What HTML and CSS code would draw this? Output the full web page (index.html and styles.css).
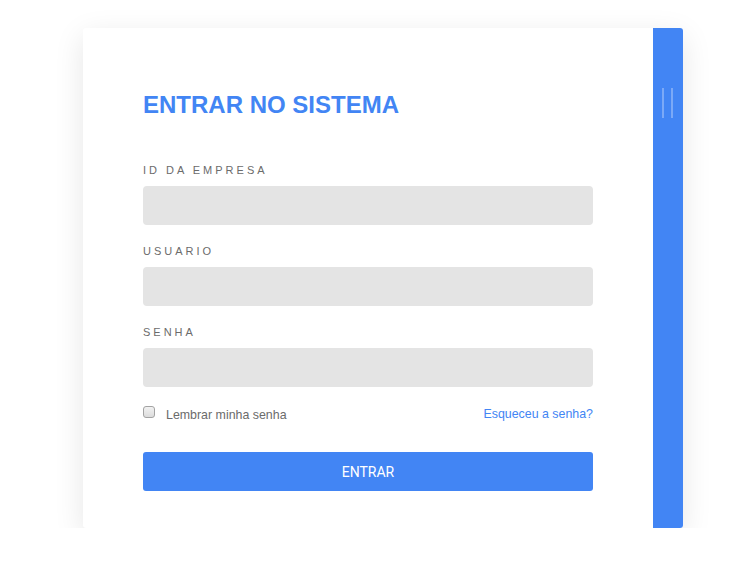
FILE: index.html
```html
<!DOCTYPE html>
<html>
<head>
    <title>Entrar no sistema</title>
    <link rel="stylesheet" href="styles.css">
</head>
<body>
    <div class="pagina">
        <div class="cartao">
            <form class="formulario" onsubmit="return false">
                <h1>ENTRAR NO SISTEMA</h1>

                <div class="campo">
                    <label for="empresa">ID DA EMPRESA</label>
                    <input id="empresa" autocomplete="off" />
                </div>

                <div class="campo">
                    <label for="usuario">USUARIO</label>
                    <input id="usuario" autocomplete="off" />
                </div>

                <div class="campo">
                    <label for="senha">SENHA</label>
                    <input id="senha" type="password" autocomplete="off" />
                </div>

                <div class="opcoes">
                    <label class="lembrar">
                        <input type="checkbox" />
                        <span>Lembrar minha senha</span>
                    </label>
                    <a href="#" class="esqueceu">Esqueceu a senha?</a>
                </div>

                <button>ENTRAR</button>
            </form>

            <!-- Barra lateral azul -->
            <div class="lateral">
                <span class="traco"></span>
                <span class="traco"></span>
            </div>
        </div>
    </div>
</body>
</html>
```

FILE: styles.css
```css
body {
    margin: 0;
    background: #fff;
    font-family: "Liberation Sans", Arial, sans-serif;
}

.pagina {
    padding: 28px 0 0 83px;
}

.cartao {
    display: flex;
    width: 600px;
    height: 500px;
    background: #fff;
    border-radius: 3px;
    overflow: hidden;
    box-shadow: 0 8px 30px rgba(0, 0, 0, 0.1);
}

.formulario {
    flex: 1;
    padding: 63px 60px 0 60px;
}

h1 {
    margin: 0 0 45px 0;
    font-size: 24px;
    line-height: 28px;
    font-weight: bold;
    color: #4285f4;
}

.campo {
    margin-bottom: 20px;
}

.campo label {
    display: block;
    margin-bottom: 9px;
    font-size: 11px;
    line-height: 13px;
    letter-spacing: 3px;
    color: #6b6b6b;
}

.campo input {
    display: block;
    box-sizing: border-box;
    width: 100%;
    height: 39px;
    border: none;
    border-radius: 4px;
    background: #e4e4e4;
    padding: 0 12px;
    outline: none;
}

.opcoes {
    display: flex;
    justify-content: space-between;
    align-items: flex-start;
    margin-top: -1px;
    height: 14px;
}

.lembrar {
    display: flex;
    align-items: flex-start;
    gap: 11px;
    font-size: 12.4px;
    line-height: 14px;
    color: #6b6b6b;
}

.lembrar input {
    -webkit-appearance: none;
    appearance: none;
    width: 12px;
    height: 12px;
    margin: 0;
    border: 1px solid #a3a3a3;
    border-radius: 3px;
    background: linear-gradient(#f2f2f2, #dcdcdc);
}

.lembrar span {
    margin-top: 2px;
}

.esqueceu {
    margin-top: 1px;
    font-size: 12.4px;
    line-height: 14px;
    color: #4285f4;
    text-decoration: none;
}

button {
    display: block;
    width: 100%;
    height: 39px;
    margin-top: 32px;
    border: none;
    border-radius: 3px;
    background: #4285f4;
    color: #fff;
    font-family: Roboto, "Liberation Sans", Arial, sans-serif;
    font-size: 14px;
    cursor: pointer;
}

/* Barra lateral */
.lateral {
    display: flex;
    align-items: flex-start;
    gap: 7px;
    width: 30px;
    box-sizing: border-box;
    padding: 60px 0 0 9px;
    background: #4285f4;
}

.traco {
    width: 2px;
    height: 30px;
    background: rgba(255, 255, 255, 0.3);
}
```
